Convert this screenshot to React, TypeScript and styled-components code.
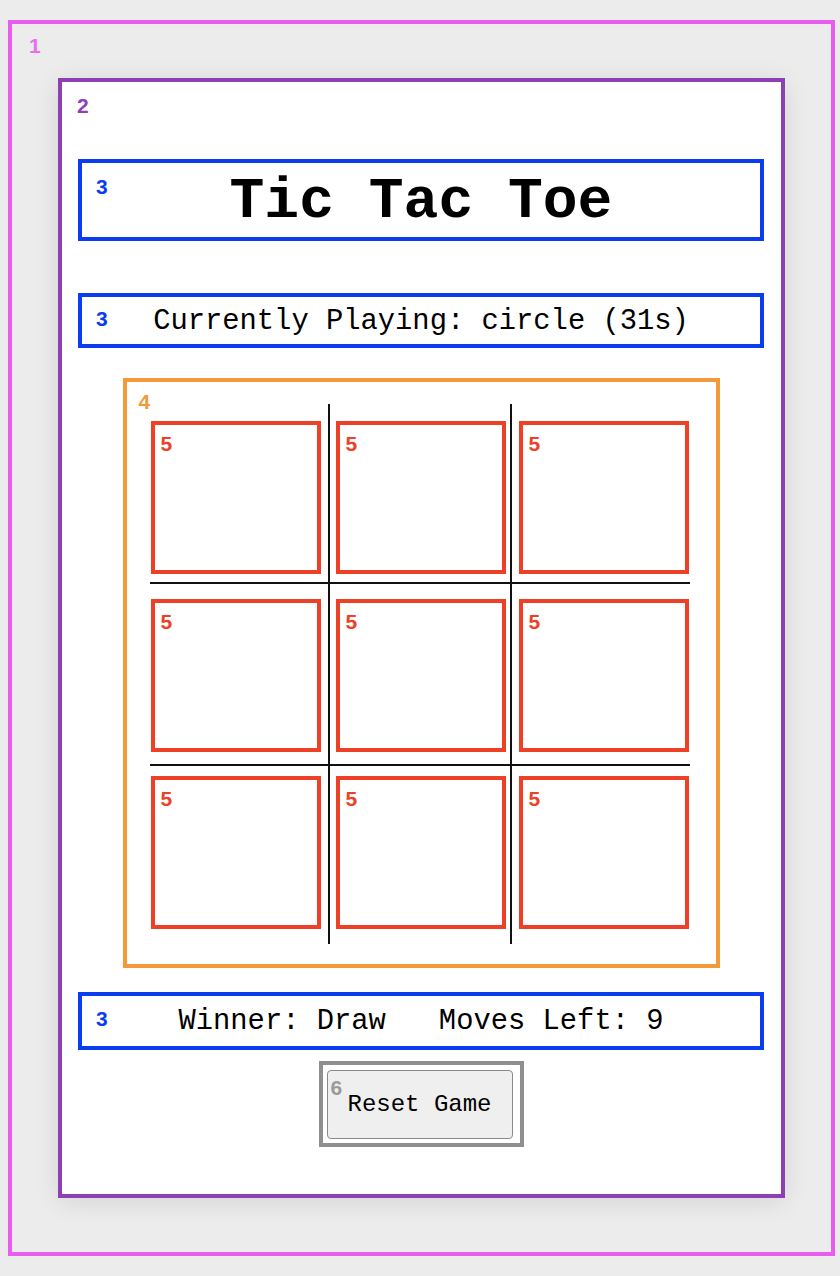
import { createGlobalStyle, css } from "styled-components";
import styled from "styled-components";

const GlobalStyle = createGlobalStyle`
  html, body {
    margin: 0;
    padding: 0;
    background: #ececec;
  }
  * { box-sizing: border-box; }
`;

// coloured box drawn over an element's bounds
const marked = (color: string) => css`
  position: relative;
  &::after {
    content: "";
    position: absolute;
    inset: 0;
    border: 4px solid ${color};
    pointer-events: none;
  }
`;

const Tag = styled.span<{ $color: string; $top: number; $left: number }>`
  position: absolute;
  top: ${(p) => p.$top}px;
  left: ${(p) => p.$left}px;
  z-index: 2;
  font-family: "Liberation Sans", Arial, sans-serif;
  font-weight: 700;
  font-size: 21px;
  line-height: 1;
  color: ${(p) => p.$color};
`;

const Frame = styled.div`
  ${marked("#e95cf0")}
  margin: 20px 0 20px 8px;
  width: 827px;
  height: 1236px;
  padding: 58px 50px;
`;

const Card = styled.main`
  ${marked("#8e3fb5")}
  width: 727px;
  height: 1120px;
  background: #fff;
  border-radius: 8px;
  box-shadow: 0 4px 26px rgba(0, 0, 0, 0.1);
  padding: 81px 21px 0 20px;
  display: flex;
  flex-direction: column;
  align-items: center;
  font-family: "Liberation Mono", "Courier New", monospace;
  color: #000;
`;

const Bar = styled.div<{ $h: number; $mt: number }>`
  ${marked("#0a3cf0")}
  width: 100%;
  height: ${(p) => p.$h}px;
  margin-top: ${(p) => p.$mt}px;
  padding-top: 3px;
  display: flex;
  align-items: center;
  justify-content: center;
`;

const Title = styled.h1`
  margin: 0;
  font-size: 58px;
  font-weight: 700;
  line-height: 1;
`;

const StatusText = styled.p`
  margin: 0;
  font-size: 28.8px;
  line-height: 1;
`;

const ResultRow = styled.div`
  display: flex;
  gap: 53px;
  font-size: 28.8px;
  line-height: 1;
`;

const Board = styled.section`
  ${marked("#f4993a")}
  margin-top: 30px;
  width: 597px;
  height: 590px;
  padding: 26px 30px 24px 27px;
  display: grid;
  grid-template-columns: repeat(3, 180px);
  grid-template-rows: repeat(3, 180px);
`;

const Cell = styled.div<{ $col: number; $row: number }>`
  border-right: ${(p) => (p.$col === 0 ? "2px solid #111" : "none")};
  border-left: ${(p) => (p.$col === 2 ? "2px solid #111" : "none")};
  border-bottom: ${(p) => (p.$row === 0 ? "2px solid #111" : "none")};
  border-top: ${(p) => (p.$row === 2 ? "2px solid #111" : "none")};
`;

const Slot = styled.button<{ $mt: number; $ml: number }>`
  ${marked("#ee4027")}
  display: block;
  width: 170px;
  height: 153px;
  margin: ${(p) => p.$mt}px 0 0 ${(p) => p.$ml}px;
  padding: 0;
  border: none;
  background: transparent;
`;

const ButtonBox = styled.div`
  ${marked("#8f8f8f")}
  margin-top: 11px;
  width: 205px;
  height: 86px;
  padding: 9px 11px 8px 8px;
  display: flex;
`;

const ResetButton = styled.button`
  flex: 1;
  background: #efefef;
  border: 1px solid #8a8a8a;
  border-radius: 4px;
  font-family: "Liberation Mono", "Courier New", monospace;
  font-size: 24px;
  color: #000;
  padding: 0;
`;

const colOffsets = [1, 6, 7];
const rowOffsets = [17, 15, 10];

export default function App() {
  const cells = Array.from({ length: 9 }, (_, i) => i);
  return (
    <>
      <GlobalStyle />
      <Frame>
        <Tag $color="#e96ff0" $top={15} $left={21}>1</Tag>
        <Card>
          <Tag $color="#8e3fb5" $top={17} $left={19}>2</Tag>
          <Bar $h={82} $mt={0}>
            <Tag $color="#0a3cf0" $top={17} $left={18}>3</Tag>
            <Title>Tic Tac Toe</Title>
          </Bar>
          <Bar $h={55} $mt={52}>
            <Tag $color="#0a3cf0" $top={15} $left={18}>3</Tag>
            <StatusText>Currently Playing: circle (31s)</StatusText>
          </Bar>
          <Board>
            <Tag $color="#f4993a" $top={13} $left={16}>4</Tag>
            {cells.map((i) => {
              const row = Math.floor(i / 3);
              const col = i % 3;
              return (
                <Cell key={i} $row={row} $col={col}>
                  <Slot $mt={rowOffsets[row]} $ml={colOffsets[col]}>
                    <Tag $color="#ee4027" $top={12} $left={10}>5</Tag>
                  </Slot>
                </Cell>
              );
            })}
          </Board>
          <Bar $h={58} $mt={24}>
            <Tag $color="#0a3cf0" $top={16} $left={18}>3</Tag>
            <ResultRow>
              <span>Winner: Draw</span>
              <span>Moves Left: 9</span>
            </ResultRow>
          </Bar>
          <ButtonBox>
            <Tag $color="#9a9a9a" $top={16} $left={12}>6</Tag>
            <ResetButton>Reset Game</ResetButton>
          </ButtonBox>
        </Card>
      </Frame>
    </>
  );
}
